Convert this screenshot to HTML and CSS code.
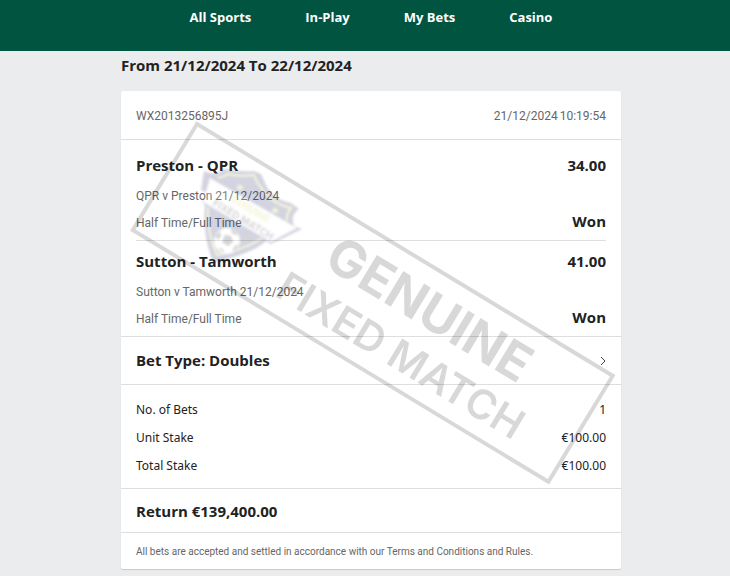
FILE: index.html
```
<!DOCTYPE html>
<html lang="en">
<head>
<meta charset="utf-8">
<meta name="viewport" content="width=device-width, initial-scale=1">
<title>My Bets</title>
<link rel="stylesheet" href="styles.css">
</head>
<body>
<header class="topbar">
  <nav class="nav" aria-label="Main">
    <a href="#sports">All Sports</a>
    <a href="#inplay">In-Play</a>
    <a href="#mybets">My Bets</a>
    <a href="#casino">Casino</a>
  </nav>
</header>
<main class="page">
  <h1 class="range">From 21/12/2024 To 22/12/2024</h1>
  <article class="card">
    <div class="row receipt">
      <span>WX2013256895J</span>
      <span class="stamp-time"><span>21/12/2024</span><span>10:19:54</span></span>
    </div>
    <div class="selections">
      <section class="selection">
        <div class="row strong"><h2>Preston - QPR</h2><span class="odds">34.00</span></div>
        <p class="detail">QPR v Preston 21/12/2024</p>
        <div class="row market"><span class="detail">Half Time/Full Time</span><span class="result">Won</span></div>
      </section>
      <section class="selection">
        <div class="row strong"><h2>Sutton - Tamworth</h2><span class="odds">41.00</span></div>
        <p class="detail">Sutton v Tamworth 21/12/2024</p>
        <div class="row market"><span class="detail">Half Time/Full Time</span><span class="result">Won</span></div>
      </section>
    </div>
    <button class="row bet-type" type="button">
      <span>Bet Type: Doubles</span>
      <svg class="chevron" viewBox="0 0 6 10" aria-hidden="true"><path d="M1 1l4 4-4 4"/></svg>
    </button>
    <dl class="stakes">
      <div class="row"><dt>No. of Bets</dt><dd>1</dd></div>
      <div class="row"><dt>Unit Stake</dt><dd>€100.00</dd></div>
      <div class="row"><dt>Total Stake</dt><dd>€100.00</dd></div>
    </dl>
    <p class="return">Return €139,400.00</p>
    <p class="terms">All bets are accepted and settled in accordance with our Terms and Conditions and Rules.</p>
    <svg class="watermark" viewBox="121 91 500 479" aria-hidden="true">
      <g class="badge">
        <path class="navy" d="M204 171C213 175 219 174 223 169Q240 172 254 171L261 174L266 185Q272 199 291 203L299 209Q290 215 294 226L302 229L271 244L266 241Q251 255 213 262Q202 234 205 206L202 201L207 193L201 190Z"/>
        <path class="gold" d="M218 177Q224 178 227 174Q240 177 254 175Q257 183 262 189Q272 204 291 208Q286 214 287 221M208 207Q207 235 217 255Q244 250 262 238"/>
        <path class="white" d="M210 178L297 228L271 242L203 202Z"/>
        <circle class="white" cx="227" cy="241" r="13"/>
        <path class="dark" d="M225 235l6 1 2 6-5 4-6-4zM215 236l5-5 1 5-3 4zM232 229l6 5-3 1-4-3zM218 248l5 1 1 4zM235 246l4-2-3 6-4 1zM243 235l9 2-9 10z"/>
        <path class="gold-fill" d="M240 183l1 3h3l-2 2 1 3-3-2-3 2 1-3-2-2h3zM275 206l1 3h3l-2 2 1 3-3-2-3 2 1-3-2-2h3z"/>
        <text class="badge-gold" transform="translate(229 200) rotate(31)">GENUINE</text>
        <text class="badge-dark" transform="translate(212 205) rotate(31)">FIXED MATCH</text>
      </g>
      <g class="stamp" transform="translate(197 124) rotate(31.2)">
        <rect width="486" height="124"/>
        <text class="stamp-large" x="180" y="56">GENUINE</text>
        <text class="stamp-small" x="154" y="107">FIXED MATCH</text>
      </g>
    </svg>
  </article>
</main>
</body>
</html>
```
FILE: styles.css
```
* { box-sizing: border-box; }
body {
  margin: 0;
  background: #ebeced;
  color: #222;
  font: 12px/20px "Noto Sans", "Open Sans", sans-serif;
}
h1, h2, p, dl, dd { margin: 0; }
.topbar {
  height: 51px;
  padding: 7px 0 0 12px;
  background: #005440;
}
.nav { display: flex; justify-content: center; gap: 54px; }
.nav a { color: #fff; font-family: "Open Sans", sans-serif; font-size: 13px; font-weight: 700; text-decoration: none; }
.page { padding: 0 0 6px 12px; }
.range, .card { width: 100%; max-width: 500px; margin: 0 auto; }
.range { padding: 4px 0 16px; font-family: "Open Sans", sans-serif; font-size: 15px; line-height: 20px; }
.card {
  position: relative;
  background: #fff;
  border-radius: 2px;
  box-shadow: 0 1px 1px #c8caca;
}
.row { display: flex; align-items: center; justify-content: space-between; }
.receipt { height: 49px; padding: 2px 15px 0; border-bottom: 1px solid #dedede; }
.receipt, .detail, .terms { color: #666; font-family: Roboto, "Noto Sans", sans-serif; }
.stamp-time { display: flex; gap: 2px; }
.selections { padding: 0 15px; border-bottom: 1px solid #dedede; }
.selection { padding: 15px 0 7px; }
.selection + .selection { padding: 10px 0 7px; border-top: 1px solid #dedede; }
.strong h2, .odds, .result, .bet-type, .return {
  font-family: "Open Sans", sans-serif;
  font-size: 15px;
  line-height: 20px;
  font-weight: 700;
}
p.detail { margin-top: 11px; }
.market { margin-top: 7px; align-items: flex-start; }
.result { line-height: 16px; }
.bet-type {
  width: 100%;
  height: 48px;
  padding: 0 15px 2px;
  border: 0;
  border-bottom: 1px solid #dedede;
  background: none;
  color: inherit;
  text-align: left;
}
.chevron { width: 6px; height: 10px; margin-top: 2px; fill: none; stroke: #444; }
.stakes {
  display: grid;
  gap: 8px;
  padding: 15px 15px 12px;
  border-bottom: 1px solid #dedede;
}
.return { padding: 12px 15px 11px; border-bottom: 1px solid #dedede; }
.terms { padding: 9px 15px 7px; font-size: 10px; }
.watermark {
  position: absolute;
  top: 0;
  left: 0;
  width: 100%;
  pointer-events: none;
}
.stamp { fill: #000; opacity: .15; font-family: Inter, sans-serif; }
.stamp rect { fill: none; stroke: #000; stroke-width: 4; }
.stamp-large { font-size: 51px; font-weight: 700; }
.stamp-small { font-size: 41px; font-weight: 600; }
.badge { opacity: .18; font-family: Inter, sans-serif; filter: blur(1px); }
.navy { fill: #14185c; }
.white { fill: #fff; }
.dark { fill: #222; }
.gold { fill: none; stroke: #c6cf30; stroke-width: 2; }
.gold-fill { fill: #c6cf30; }
.badge-gold { fill: #c6cf30; font-size: 10px; font-weight: 700; }
.badge-dark { fill: #222; font-size: 10px; font-weight: 700; }
```
